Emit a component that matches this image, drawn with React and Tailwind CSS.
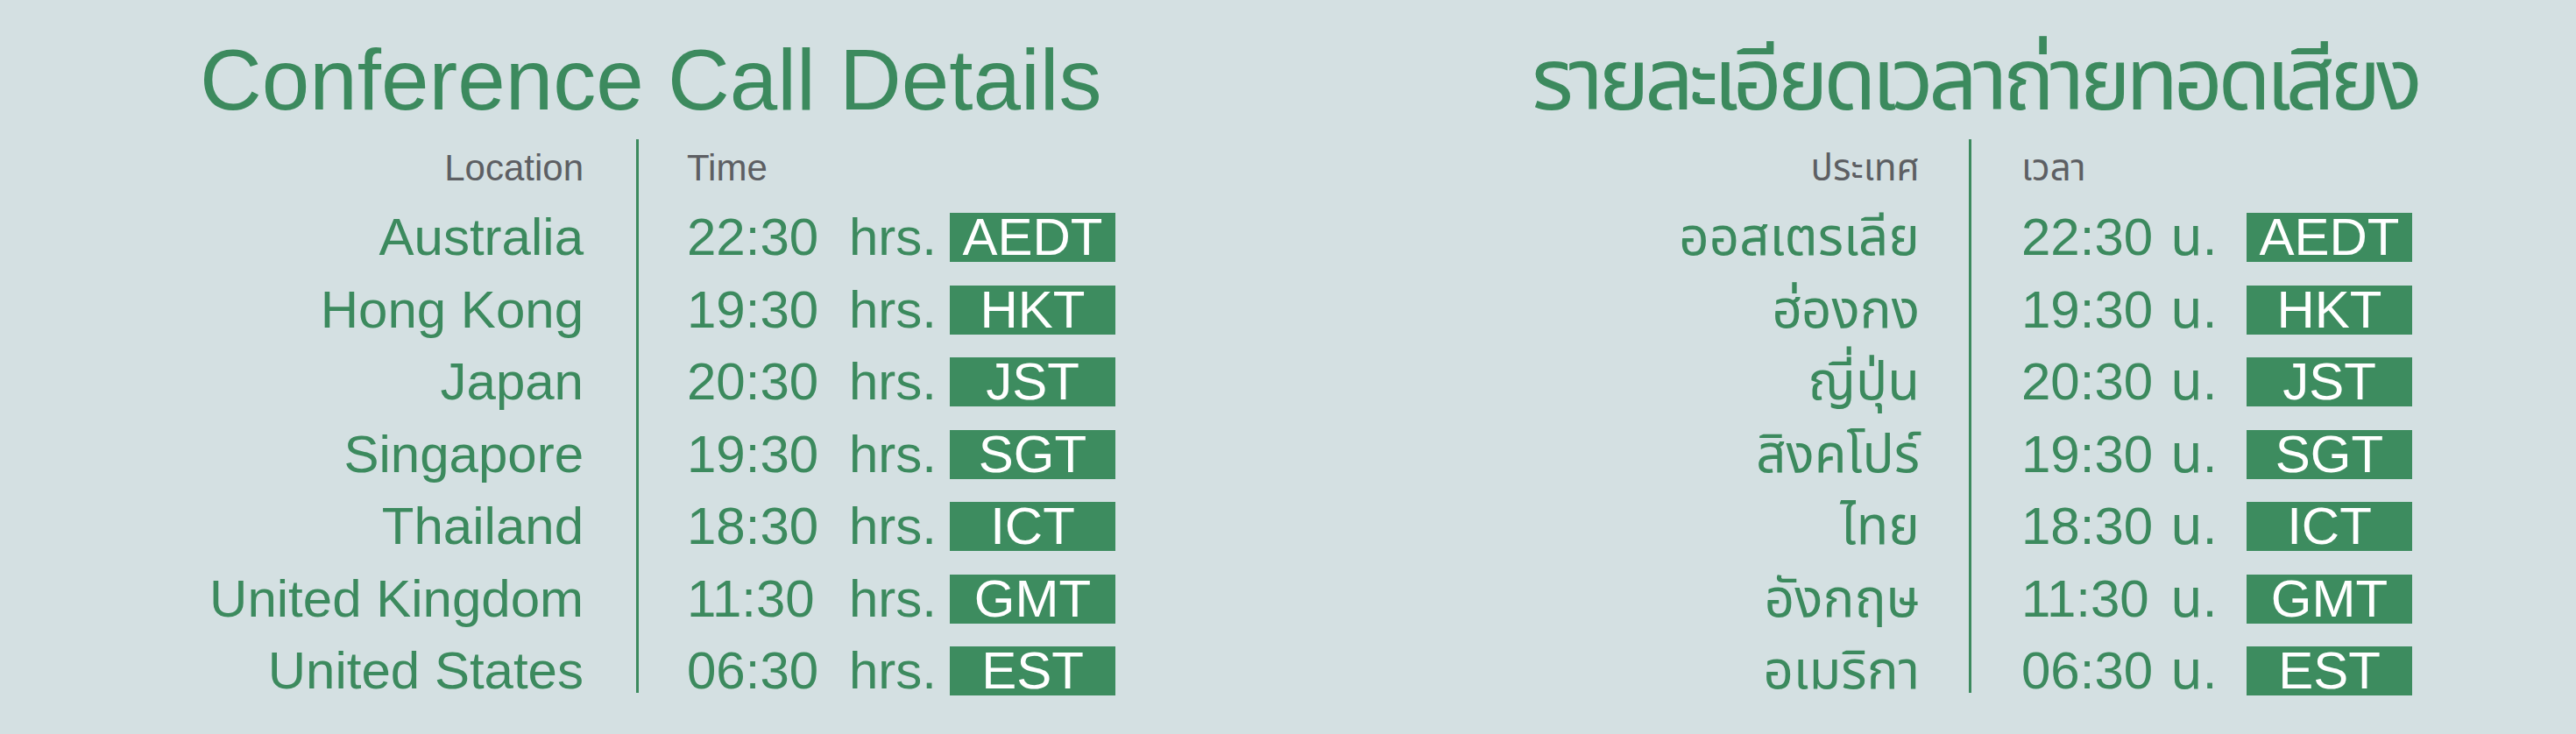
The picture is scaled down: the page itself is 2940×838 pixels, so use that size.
import React from 'react'

const rows = [
  { en: 'Australia', th: 'ออสเตรเลีย', time: '22:30', zone: 'AEDT' },
  { en: 'Hong Kong', th: 'ฮ่องกง', time: '19:30', zone: 'HKT' },
  { en: 'Japan', th: 'ญี่ปุ่น', time: '20:30', zone: 'JST' },
  { en: 'Singapore', th: 'สิงคโปร์', time: '19:30', zone: 'SGT' },
  { en: 'Thailand', th: 'ไทย', time: '18:30', zone: 'ICT' },
  { en: 'United Kingdom', th: 'อังกฤษ', time: '11:30', zone: 'GMT' },
  { en: 'United States', th: 'อเมริกา', time: '06:30', zone: 'EST' },
]

const font = { fontFamily: '"Liberation Sans", "Noto Sans Thai", "Noto Sans Thai UI", "Sarabun", "Loma", "Garuda", "Waree", "Noto Sans", sans-serif' }

function Badge({ children }) {
  return (
    <span className="inline-flex h-[56px] w-[189px] items-center justify-center bg-[#3d8c5f] text-[60px] leading-none text-white">
      {children}
    </span>
  )
}

function Panel({ title, lang }) {
  const th = lang === 'th'
  return (
    <section className="flex w-[1470px] flex-col">
      <h1 className={th ? 'ml-[278px] mt-[42px] text-[98px] leading-[98px] tracking-[-5.5px] text-[#3c8a5e]' : 'ml-[228px] mt-[42px] text-[98px] leading-[98px] text-[#3c8a5e]'}>
        {title}
      </h1>
      <div className="mt-[19px] flex items-start">
        {/* place names */}
        <div className={th ? 'w-[721px] text-right' : 'w-[666px] text-right'}>
          <div className="h-[71px] text-[42px] leading-[66px] text-[#5d5f63]">{th ? 'ประเทศ' : 'Location'}</div>
          {rows.map(r => (
            <div key={r.zone} className="h-[82.5px] text-[60px] leading-[82.5px] text-[#3c8a5e]">{th ? r.th : r.en}</div>
          ))}
        </div>
        <div className={th ? 'ml-[56px] h-[632px] w-[3px] bg-[#3c8a5e]' : 'ml-[60px] h-[632px] w-[3px] bg-[#3c8a5e]'} />
        {/* times */}
        <div className={th ? 'ml-[57px]' : 'ml-[55px]'}>
          <div className="h-[71px] text-[42px] leading-[66px] text-[#5d5f63]">{th ? 'เวลา' : 'Time'}</div>
          {rows.map(r => (
            <div key={r.zone} className="flex h-[82.5px] items-center text-[60px] leading-[82.5px] text-[#3c8a5e]">
              <span className="w-[150px]">{r.time}</span>
              {th
                ? <span className="ml-[20px] w-[87px]">น.</span>
                : <span className="ml-[35px] w-[115px]">hrs.</span>}
              <Badge>{r.zone}</Badge>
            </div>
          ))}
        </div>
      </div>
    </section>
  )
}

export default function App() {
  return (
    <div className="flex h-[838px] w-[2940px] overflow-hidden bg-[#d4e0e2]" style={font}>
      <Panel title="Conference Call Details" lang="en" />
      <Panel title="รายละเอียดเวลาถ่ายทอดเสียง" lang="th" />
    </div>
  )
}
